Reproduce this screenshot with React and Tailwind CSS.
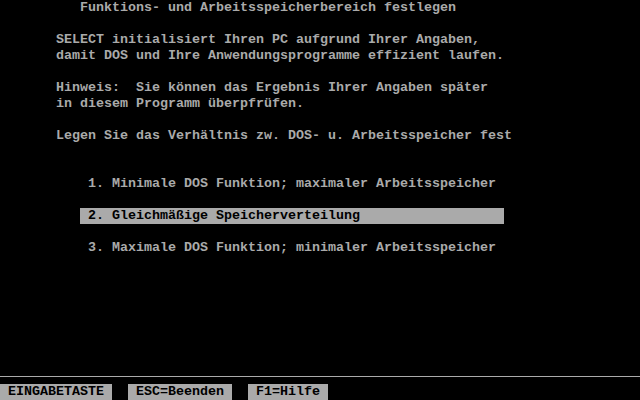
import React from "react";

const font = { fontFamily: '"Liberation Mono", "DejaVu Sans Mono", monospace' };

function Row({ children, className = "" }) {
  return (
    <div className={"h-[16px] leading-[16px] whitespace-pre flex " + className}>{children}</div>
  );
}

export default function App() {
  return (
    <div
      className="w-[640px] h-[400px] bg-black text-[#aaaaaa] text-[13.333px] font-bold overflow-hidden flex flex-col"
      style={font}
    >
      <Row className="pl-[80px]">Funktions- und Arbeitsspeicherbereich festlegen</Row>
      <Row />
      <Row className="pl-[56px]">SELECT initialisiert Ihren PC aufgrund Ihrer Angaben,</Row>
      <Row className="pl-[56px]">damit DOS und Ihre Anwendungsprogramme effizient laufen.</Row>
      <Row />
      <Row className="pl-[56px]">Hinweis:  Sie können das Ergebnis Ihrer Angaben später</Row>
      <Row className="pl-[56px]">in diesem Programm überpfrüfen.</Row>
      <Row />
      <Row className="pl-[56px]">Legen Sie das Verhältnis zw. DOS- u. Arbeitsspeicher fest</Row>
      <Row />
      <Row />
      <Row className="pl-[88px]">1. Minimale DOS Funktion; maximaler Arbeitsspeicher</Row>
      <Row />
      <Row className="pl-[80px]">
        <div className="w-[424px] bg-[#aaaaaa] text-black pl-[8px]">2. Gleichmäßige Speicherverteilung</div>
      </Row>
      <Row />
      <Row className="pl-[88px]">3. Maximale DOS Funktion; minimaler Arbeitsspeicher</Row>
      <div className="flex-1" />
      <div className="h-[16px] flex items-center">
        <div className="w-full h-px bg-[#aaaaaa]" />
      </div>
      <Row className="text-black">
        <div className="w-[112px] bg-[#aaaaaa] pl-[8px]">EINGABETASTE</div>
        <div className="w-[16px]" />
        <div className="w-[104px] bg-[#aaaaaa] pl-[8px]">ESC=Beenden</div>
        <div className="w-[16px]" />
        <div className="w-[80px] bg-[#aaaaaa] pl-[8px]">F1=Hilfe</div>
      </Row>
    </div>
  );
}
